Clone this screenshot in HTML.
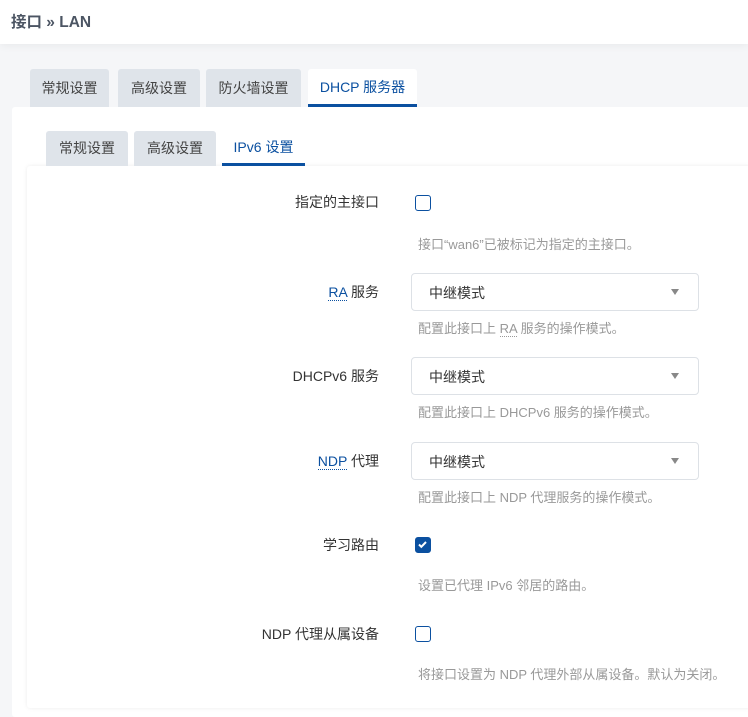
<!DOCTYPE html>
<html><head><meta charset="utf-8"><style>
*{box-sizing:border-box;margin:0;padding:0}
body{width:748px;height:712px;overflow:hidden;background:#f5f6f8;font-family:"Liberation Sans","Noto Sans CJK SC",sans-serif;font-size:14px;color:#333;position:relative}
.hdr{position:absolute;left:0;top:0;width:748px;height:44px;background:#fff;box-shadow:0 2px 8px rgba(0,0,0,.05)}
.hdr h2{position:absolute;left:11px;top:10px;font-size:15.5px;font-weight:bold;color:#4c5563}
.tab{position:absolute;background:#dfe4ea;border-radius:3px 3px 0 0;color:#444;font-size:14px;text-align:center}
.tab.on{background:#fff;color:#0b50a0;border-bottom:3px solid #0b50a0}
.p1{position:absolute;left:12px;top:107px;width:740px;height:610px;background:#fff;border-radius:3px}
.p2{position:absolute;left:27px;top:166px;width:725px;height:542px;background:#fff;box-shadow:0 0 4px rgba(0,0,0,.08);border-radius:3px}
.lbl{position:absolute;right:369px;font-size:14px;color:#333;white-space:nowrap}
.ab{border-bottom:1px dotted #0b50a0;color:#0b50a0}
.cb{position:absolute;left:415px;width:16px;height:16px;border:1.5px solid #0b50a0;border-radius:3px;background:#fff}
.cb.on{background:#0b50a0}
.desc{position:absolute;left:418px;font-size:13px;color:#999;white-space:nowrap}
.sel{position:absolute;left:411px;width:288px;height:38px;border:1px solid #dde1e6;border-radius:4px;background:#fff}
.sel span{position:absolute;left:17px;top:9px;font-size:14px;color:#333}
.sel i{position:absolute;right:19px;top:15px;border-left:4px solid transparent;border-right:4px solid transparent;border-top:6px solid #888}
</style></head><body>
<div class="hdr"><h2>接口 » LAN</h2></div>
<div class="p1"></div>
<div class="tab" style="left:30px;top:69px;width:79px;height:38px;line-height:38px">常规设置</div>
<div class="tab" style="left:118px;top:69px;width:82px;height:38px;line-height:38px">高级设置</div>
<div class="tab" style="left:206px;top:69px;width:95px;height:38px;line-height:38px">防火墙设置</div>
<div class="tab on" style="left:308px;top:69px;width:109px;height:38px;line-height:36px">DHCP 服务器</div>
<div class="p2"></div>
<div class="tab" style="left:46px;top:131px;width:82px;height:35px;line-height:35px">常规设置</div>
<div class="tab" style="left:134px;top:131px;width:82px;height:35px;line-height:35px">高级设置</div>
<div class="tab on" style="left:222px;top:131px;width:83px;height:35px;line-height:33px">IPv6 设置</div>

<div class="lbl" style="top:192px">指定的主接口</div>
<div class="cb" style="top:195px"></div>
<div class="desc" style="top:234px">接口“wan6”已被标记为指定的主接口。</div>

<div class="lbl" style="top:282px"><span class="ab">RA</span> 服务</div>
<div class="sel" style="top:273px"><span>中继模式</span><i></i></div>
<div class="desc" style="top:318px">配置此接口上 <span style="border-bottom:1px dotted #999">RA</span> 服务的操作模式。</div>

<div class="lbl" style="top:366px">DHCPv6 服务</div>
<div class="sel" style="top:357px"><span>中继模式</span><i></i></div>
<div class="desc" style="top:402px">配置此接口上 DHCPv6 服务的操作模式。</div>

<div class="lbl" style="top:451px"><span class="ab">NDP</span> 代理</div>
<div class="sel" style="top:442px"><span>中继模式</span><i></i></div>
<div class="desc" style="top:487px">配置此接口上 NDP 代理服务的操作模式。</div>

<div class="lbl" style="top:535px">学习路由</div>
<div class="cb on" style="top:537px"><svg width="13" height="13" viewBox="0 0 13 13" style="position:absolute;left:0;top:0"><path d="M3 6.5l2.3 2.3L10 4" stroke="#fff" stroke-width="2" fill="none"/></svg></div>
<div class="desc" style="top:575px">设置已代理 IPv6 邻居的路由。</div>

<div class="lbl" style="top:624px">NDP 代理从属设备</div>
<div class="cb" style="top:626px"></div>
<div class="desc" style="top:664px">将接口设置为 NDP 代理外部从属设备。默认为关闭。</div>
</body></html>
